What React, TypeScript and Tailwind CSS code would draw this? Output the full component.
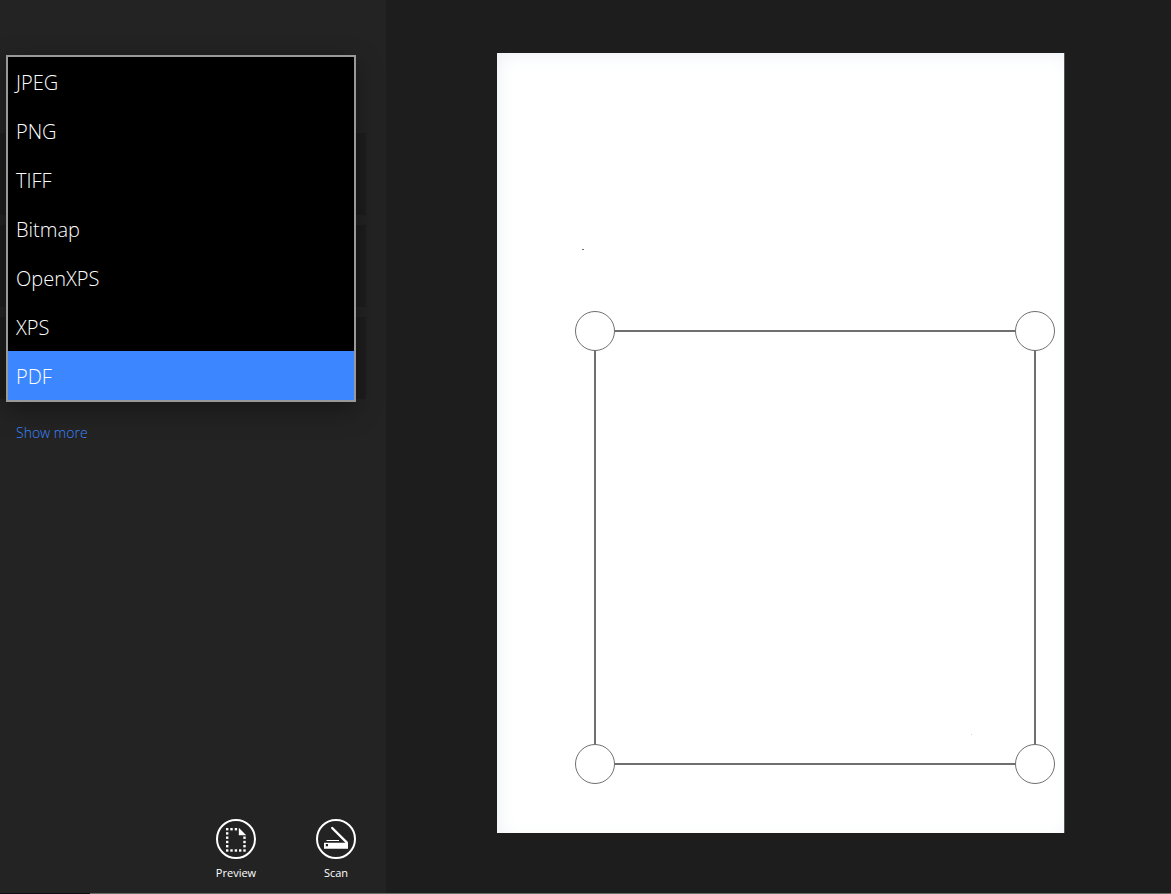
import { useState } from "react";
import type { ReactNode } from "react";

const FILE_TYPES = ["JPEG", "PNG", "TIFF", "Bitmap", "OpenXPS", "XPS", "PDF"];

const HANDLES = [
  { label: "Top left", className: "-left-[21px] -top-[21px]" },
  { label: "Top right", className: "-right-[21px] -top-[21px]" },
  { label: "Bottom left", className: "-left-[21px] -bottom-[21px]" },
  { label: "Bottom right", className: "-right-[21px] -bottom-[21px]" },
];

function PreviewIcon() {
  const columns = [10, 14.3, 18.7, 23, 27.3];
  const rows = [9, 13.2, 17.5, 21.8, 26, 30.3];
  return (
    <svg viewBox="0 0 40 40" className="size-10" aria-hidden="true">
      <circle cx="20" cy="20" r="19" fill="none" stroke="white" strokeWidth="2" />
      <g fill="white">
        {columns.slice(0, 3).map((x) => (
          <rect key={`t${x}`} x={x} y="9" width="2.4" height="2.4" />
        ))}
        {columns.map((x) => (
          <rect key={`b${x}`} x={x} y="30.3" width="2.4" height="2.4" />
        ))}
        {rows.slice(1, 5).map((y) => (
          <rect key={`l${y}`} x="10" y={y} width="2.4" height="2.4" />
        ))}
        {rows.slice(2, 5).map((y) => (
          <rect key={`r${y}`} x="27.3" y={y} width="2.4" height="2.4" />
        ))}
        <path d="M22.8 8.8 L30.2 16.2 H22.8 Z" />
      </g>
    </svg>
  );
}

function ScanIcon() {
  return (
    <svg viewBox="0 0 40 40" className="size-10" aria-hidden="true">
      <circle cx="20" cy="20" r="19" fill="none" stroke="white" strokeWidth="2" />
      <path d="M16.2 9 L30.4 23.2" stroke="white" strokeWidth="2.4" strokeLinecap="round" />
      <path d="M10.5 21.5 H23" stroke="white" strokeWidth="1" />
      <path
        d="M8 23.8 H29 L31 22.4 L32 23.8 V29.8 H8 Z M9.8 25 V27.2 H12 V25 Z"
        fill="white"
        fillRule="evenodd"
      />
    </svg>
  );
}

interface AppBarButtonProps {
  label: string;
  icon: ReactNode;
}

function AppBarButton({ label, icon }: AppBarButtonProps) {
  return (
    <button type="button" className="flex w-[100px] flex-col items-center gap-1 text-[11px] leading-5">
      {icon}
      {label}
    </button>
  );
}

export default function App() {
  const [fileType, setFileType] = useState("PDF");

  return (
    <div className="flex min-h-screen flex-col bg-[#1d1d1d] font-['Open_Sans','Noto_Sans',sans-serif] text-white">
      <div className="flex flex-1">
        <aside className="relative flex w-[386px] shrink-0 flex-col bg-[#232323] pt-[133px]">
          <div className="mr-5 flex flex-col gap-[10px]">
            <div className="h-[82px] bg-[#1d1d1d]" />
            <div className="h-[82px] bg-[#1d1d1d]" />
            <div className="h-[82px] bg-[#1d1d1d]" />
          </div>

          <select
            size={7}
            aria-label="File type"
            value={fileType}
            onChange={(e) => setFileType(e.target.value)}
            className="absolute left-[6px] top-[55px] h-[347px] w-[350px] appearance-none overflow-hidden border-2 border-[#999999] bg-black p-0 text-[20px] text-white shadow-[0_8px_24px_rgba(0,0,0,0.35)] outline-none"
          >
            {FILE_TYPES.map((type) => (
              <option
                key={type}
                value={type}
                className="flex h-[49px] items-center px-2 pt-[2px] pb-0 leading-[47px] font-[350] text-white checked:bg-[#3c87ff] checked:bg-linear-to-r checked:from-[#3c87ff] checked:to-[#3c87ff]"
              >
                {type}
              </option>
            ))}
          </select>

          <a href="#more" className="mt-6 ml-4 self-start text-[14px] leading-5 font-[350] text-[#3c87ff]">
            Show more
          </a>

          <div className="mt-auto flex justify-end pb-[10px]">
            <AppBarButton label="Preview" icon={<PreviewIcon />} />
            <AppBarButton label="Scan" icon={<ScanIcon />} />
          </div>
        </aside>

        <main className="flex flex-1 pt-[53px] pr-[106px] pb-[60px] pl-[111px]">
          <div className="relative flex-1 border-r border-[#555555] bg-white shadow-[inset_4px_4px_20px_-4px_#e9eff4]">
            {/* dust picked up from the scanner glass */}
            <span className="absolute left-[85px] top-[196px] h-px w-[2px] bg-gray-500" />
            <span className="absolute left-[474px] top-[681px] size-px bg-gray-300" />

            <div className="absolute top-[277px] right-[28px] bottom-[68px] left-[97px] border-2 border-[#6f6f6f]">
              {HANDLES.map((handle) => (
                <button
                  key={handle.label}
                  type="button"
                  aria-label={handle.label}
                  className={`absolute size-10 rounded-full border border-[#6f6f6f] bg-white ${handle.className}`}
                />
              ))}
            </div>
          </div>
        </main>
      </div>
      <div className="flex h-px">
        <div className="w-[90px] bg-[#120a10]" />
        <div className="flex-1 bg-[#6b6b6b]" />
      </div>
    </div>
  );
}
